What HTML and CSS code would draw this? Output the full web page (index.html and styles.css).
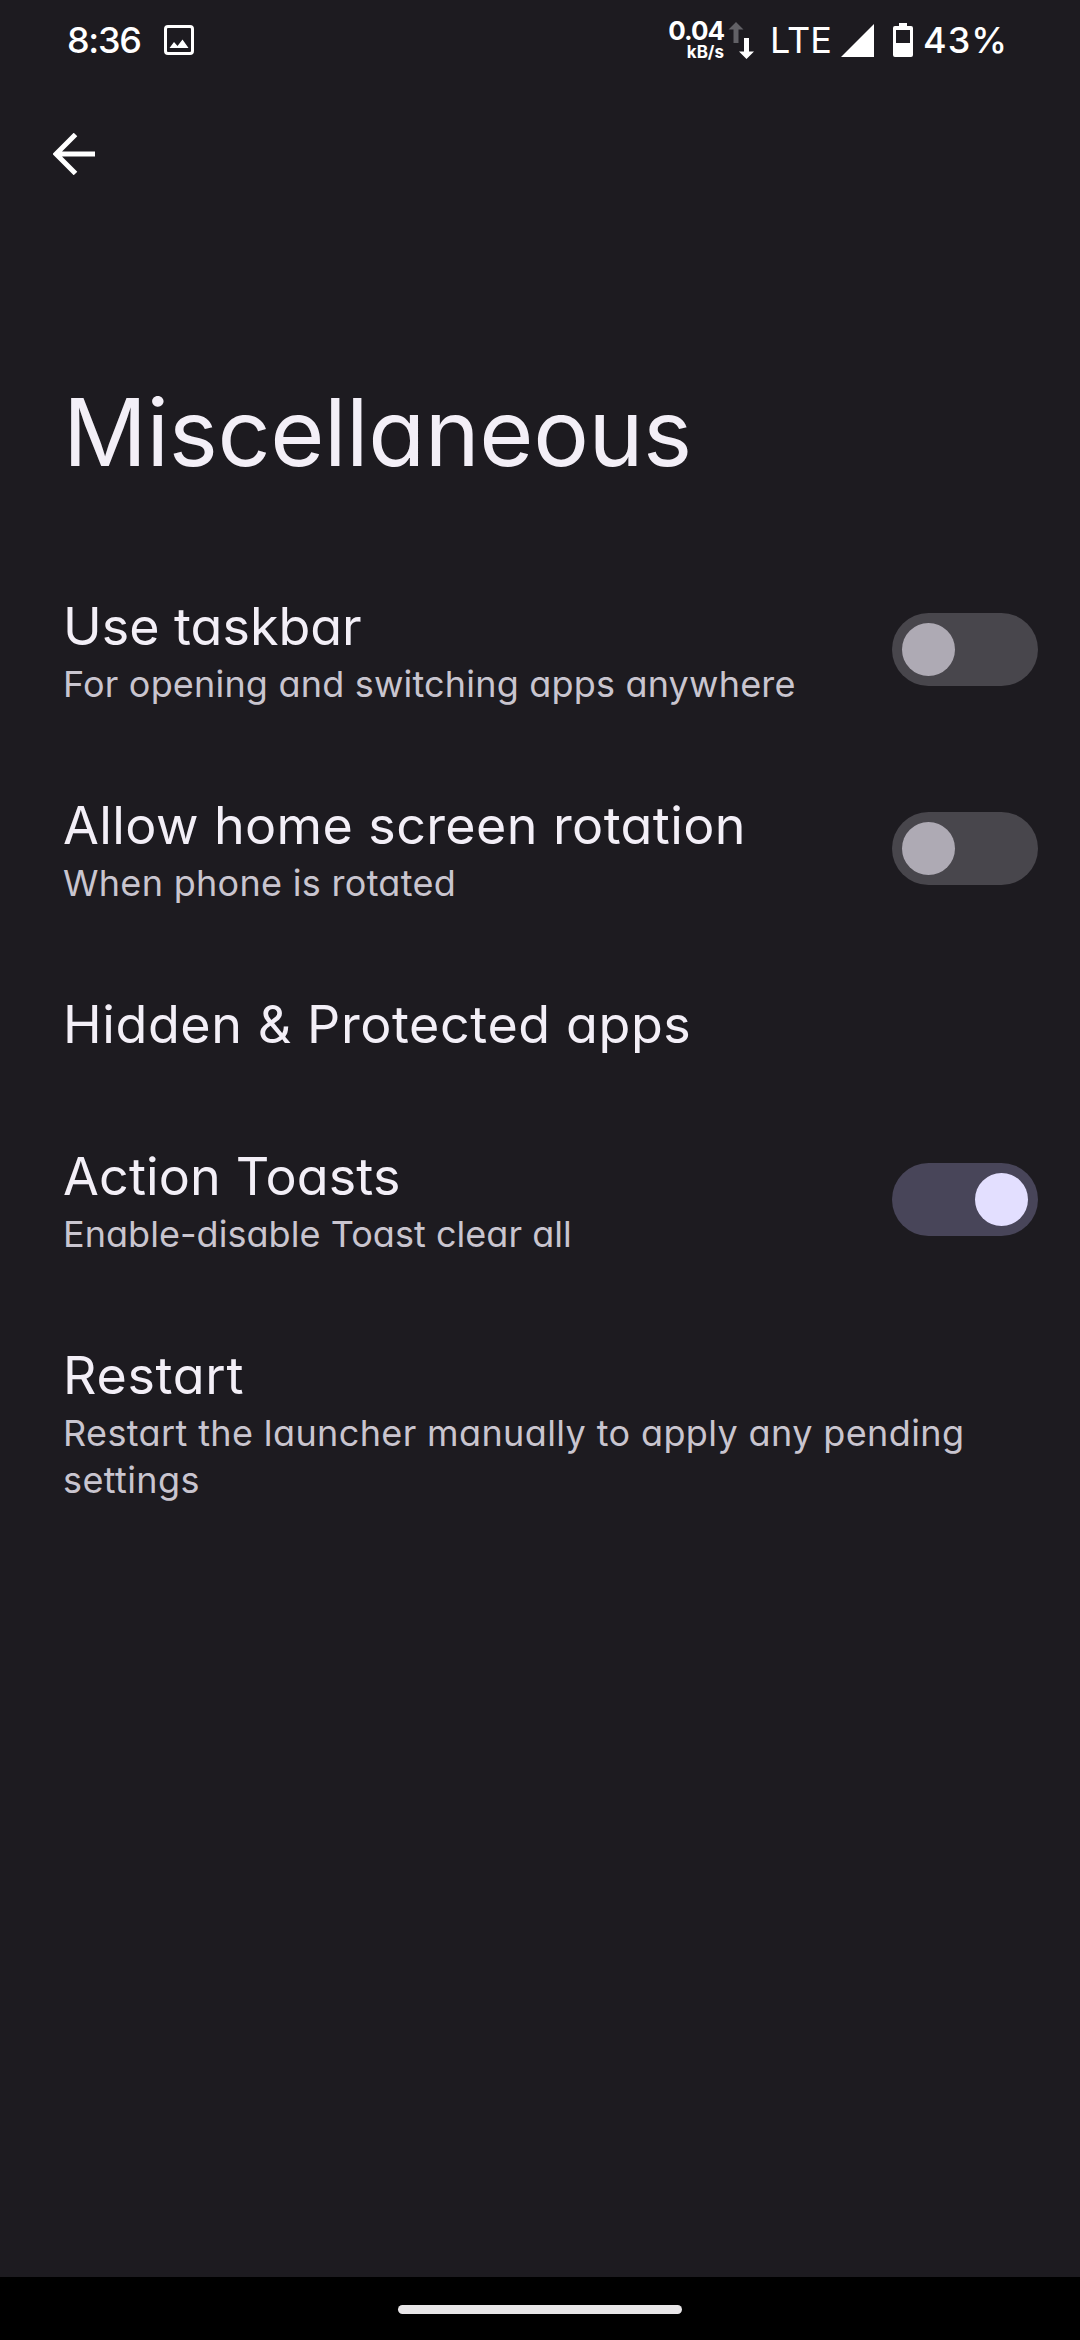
FILE: index.html
```html
<!DOCTYPE html>
<html lang="en">
<head>
<meta charset="utf-8">
<title>Miscellaneous</title>
<link rel="stylesheet" href="styles.css">
</head>
<body>
<div class="screen">
  <header class="status">
    <span class="clock">8:36</span>
    <svg class="photo" width="30" height="30" viewBox="0 0 30 30"><rect x="1.5" y="1.5" width="27" height="27" rx="2.500" fill="none" stroke="#fff" stroke-width="3"/><path d="M5.500 23l4.500-6 3.500 4 5-6.500 6 8.500z" fill="#fff"/></svg>
    <span class="grow"></span>
    <span class="speed"><span class="rate">0.04</span><span class="unit">kB/s</span></span>
    <svg class="arrows" width="26" height="37" viewBox="0 0 26 37"><path d="M8 0l7.500 7.500h-5V21h-5V7.500H.5z" fill="#626166"/><path d="M18.500 37l7.500-7.500h-5V16h-5v13.500h-5z" fill="#fff"/></svg>
    <span class="lte">LTE</span>
    <svg class="signal" width="33" height="33" viewBox="0 0 33 33"><path d="M33 0v33H0z" fill="#fff"/></svg>
    <svg class="battery" width="20" height="34" viewBox="0 0 20 34"><path fill-rule="evenodd" d="M6 0h8v3h4q2 0 2 2v27q0 2-2 2H2q-2 0-2-2V5q0-2 2-2h4zM3 7v13h14V7z" fill="#fff"/></svg>
    <span class="percent">43%</span>
  </header>
  <nav class="toolbar">
    <svg width="42" height="42" viewBox="0 0 42 42"><path d="M22.500 1.500L3 21l19.500 19.500M3 21h39" fill="none" stroke="#fff" stroke-width="5"/></svg>
  </nav>
  <h1 class="heading">Miscellaneous</h1>
  <main class="list">
    <section class="row">
      <div class="text"><div class="title">Use taskbar</div><div class="sub">For opening and switching apps anywhere</div></div>
      <span class="switch"></span>
    </section>
    <section class="row rotation">
      <div class="text"><div class="title">Allow home screen rotation</div><div class="sub">When phone is rotated</div></div>
      <span class="switch"></span>
    </section>
    <section class="row hidden-apps">
      <div class="text"><div class="title">Hidden &amp; Protected apps</div></div>
    </section>
    <section class="row toasts">
      <div class="text"><div class="title">Action Toasts</div><div class="sub">Enable-disable Toast clear all</div></div>
      <span class="switch on"></span>
    </section>
    <section class="row restart">
      <div class="text"><div class="title">Restart</div><div class="sub">Restart the launcher manually to apply any pending settings</div></div>
    </section>
  </main>
  <footer class="navbar"><span class="pill"></span></footer>
</div>
</body>
</html>
```

FILE: styles.css
```css
* { box-sizing: border-box; }
body {
  margin: 0;
  background: #1d1b20;
  color: #f3eff7;
  font-family: Inter, "Liberation Sans", sans-serif;
  font-feature-settings: "cv11";
}
svg { display: block; flex: none; }
.screen { display: flex; flex-direction: column; width: 1080px; height: 2340px; overflow: hidden; }
.status {
  display: flex;
  align-items: center;
  height: 80px;
  padding: 0 0 0 67px;
  color: #fff;
  font-size: 36px;
  font-weight: 500;
  white-space: nowrap;
}
.clock { width: 97px; letter-spacing: -1.3px; }
.grow { flex: 1; }
.speed { display: flex; flex-direction: column; align-items: flex-end; margin-right: 4px; font-weight: 700; }
.rate { font-size: 26px; line-height: 24px; letter-spacing: -1px; }
.unit { font-size: 17px; line-height: 18px; }
.arrows { margin-right: 16px; }
.lte { width: 71px; font-weight: 400; }
.battery { margin: 0 10px 0 19px; }
.percent { width: 157px; letter-spacing: 1px; }
.toolbar { height: 148px; padding: 53px; }
.heading {
  margin: 0;
  height: 322px;
  padding: 148px 63px 0;
  font-size: 93px;
  font-weight: 400;
  line-height: 112px;
  letter-spacing: -.4px;
  white-space: nowrap;
}
.list { display: flex; flex-direction: column; }
.row { display: flex; align-items: center; justify-content: space-between; padding: 42px 42px 42px 63px; }
.text { padding-top: 1px; margin-bottom: -1px; }
.title { font-size: 52px; line-height: 68px; }
.sub { color: #c9c5cf; font-size: 36px; line-height: 47px; letter-spacing: .19px; }
.rotation .title { letter-spacing: .4px; }
.rotation .sub { letter-spacing: .3px; }
.hidden-apps .title { letter-spacing: .6px; }
.toasts .title { letter-spacing: .15px; }
.toasts .sub { letter-spacing: .05px; }
.restart .title { letter-spacing: .7px; }
.restart .sub { letter-spacing: .38px; }
.switch { flex: none; display: flex; width: 146px; height: 73px; padding: 10px; border-radius: 37px; background: #48464c; }
.switch::before { content: ""; width: 53px; height: 53px; border-radius: 50%; background: #aeaab4; }
.switch.on { justify-content: flex-end; background: #484559; }
.switch.on::before { background: #e3dfff; }
.navbar { display: flex; justify-content: center; height: 63px; margin-top: auto; padding-top: 28px; background: #000; }
.pill { width: 284px; height: 9px; border-radius: 5px; background: #e8e6e8; }
```
